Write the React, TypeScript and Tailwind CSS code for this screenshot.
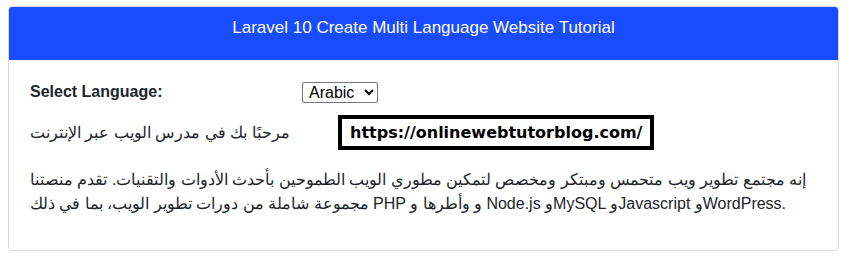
export default function App() {
  return (
    <div className="min-h-screen bg-white px-2 pt-[6px] text-[#212529] font-['Liberation_Sans',Arial,sans-serif] text-base leading-6">
      <div className="w-[831px] rounded border border-[#dcdcdc]">
        <div className="h-[53px] rounded-t-[3px] bg-[#1a4cff] pt-[9px] text-center text-[17px] leading-6 text-white">
          Laravel 10 Create Multi Language Website Tutorial
        </div>

        <div className="px-[21px] pt-[20px] pb-[34px]">
          <div className="flex items-center">
            <label className="w-[272px] font-bold">Select Language:</label>
            <select
              defaultValue="ar"
              className="h-[21px] w-[76px] rounded-[2px] border border-[#767676] bg-white pl-[2px] text-base leading-5 text-black"
              style={{ appearance: "auto" }}
            >
              <option value="en">English</option>
              <option value="ar">Arabic</option>
              <option value="fr">French</option>
            </select>
          </div>

          <div className="mt-[11px] flex items-center">
            <p className="w-[308px]">مرحبًا بك في مدرس الويب عبر الإنترنت</p>
            <div className="border-4 border-black px-[8px] py-[1px] font-['DejaVu_Sans',sans-serif] text-base font-bold leading-[25px] text-black">
              https://onlinewebtutorblog.com/
            </div>
          </div>

          <p className="mt-[18px] w-[780px]">
            إنه مجتمع تطوير ويب متحمس ومبتكر ومخصص لتمكين مطوري الويب الطموحين بأحدث الأدوات والتقنيات. تقدم منصتنا مجموعة شاملة من دورات تطوير الويب، بما في ذلك PHP و وأطرها و Node.js وMySQL وJavascript وWordPress.
          </p>
        </div>
      </div>
    </div>
  );
}
